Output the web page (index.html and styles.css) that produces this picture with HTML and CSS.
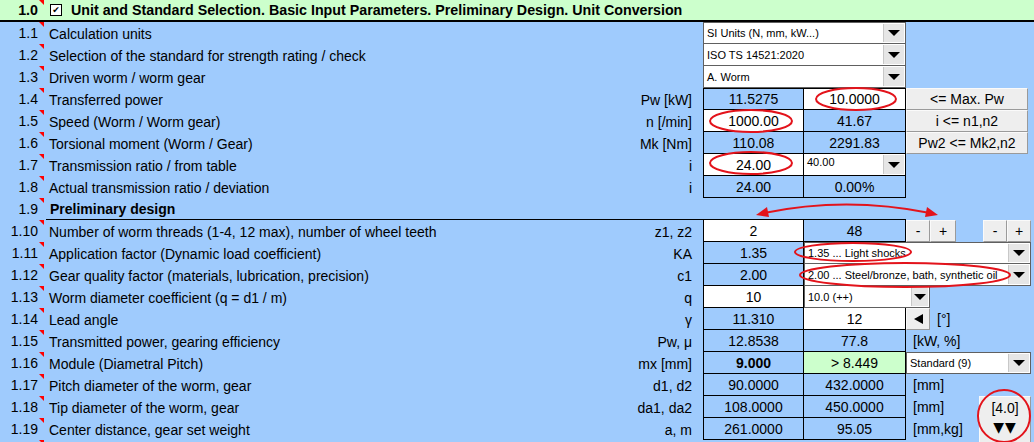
FILE: index.html
```html
<!DOCTYPE html>
<html>
<head>
<meta charset="utf-8">
<link rel="stylesheet" href="styles.css">
</head>
<body>
<div class="sheet">
  <div class="num hd">1.0</div>
  <div class="title hd"><span class="chk">✔</span>Unit and Standard Selection. Basic Input Parameters. Preliminary Design. Unit Conversion</div>

  <div class="num">1.1</div>
  <div class="lbl"><span>Calculation units</span></div>
  <div class="dd s2">SI Units (N, mm, kW...)<i class="arr"></i></div>
  <div></div>

  <div class="num">1.2</div>
  <div class="lbl"><span>Selection of the standard for strength rating / check</span></div>
  <div class="dd s2 nt">ISO TS 14521:2020<i class="arr"></i></div>
  <div></div>

  <div class="num">1.3</div>
  <div class="lbl"><span>Driven worm / worm gear</span></div>
  <div class="dd s2 nt">A. Worm<i class="arr"></i></div>
  <div></div>

  <div class="num">1.4</div>
  <div class="lbl"><span>Transferred power</span><span>Pw [kW]</span></div>
  <div class="v c1 t">11.5275</div>
  <div class="v t w">10.0000</div>
  <div class="btn">&lt;= Max. Pw</div>

  <div class="num">1.5</div>
  <div class="lbl"><span>Speed (Worm / Worm gear)</span><span>n [/min]</span></div>
  <div class="v c1 w">1000.00</div>
  <div class="v">41.67</div>
  <div class="btn">i &lt;= n1,n2</div>

  <div class="num">1.6</div>
  <div class="lbl"><span>Torsional moment (Worm / Gear)</span><span>Mk [Nm]</span></div>
  <div class="v c1">110.08</div>
  <div class="v">2291.83</div>
  <div class="btn">Pw2 &lt;= Mk2,n2</div>

  <div class="num">1.7</div>
  <div class="lbl"><span>Transmission ratio / from table</span><span>i</span></div>
  <div class="v c1 w">24.00</div>
  <div class="v w ddv"><span class="ddt">40.00</span><i class="arr"></i></div>
  <div></div>

  <div class="num">1.8</div>
  <div class="lbl"><span>Actual transmission ratio / deviation</span><span>i</span></div>
  <div class="v c1">24.00</div>
  <div class="v">0.00%</div>
  <div></div>

  <div class="num">1.9</div>
  <div class="lbl sec"><span>Preliminary design</span></div>
  <div class="s2 secline"></div>
  <div></div>

  <div class="num">1.10</div>
  <div class="lbl"><span>Number of worm threads (1-4, 12 max), number of wheel teeth</span><span>z1, z2</span></div>
  <div class="v c1 w">2</div>
  <div class="v">48</div>
  <div class="ext">
    <span class="btn sb">-</span><span class="btn sb wide">+</span>
    <span class="btn sb gapl">-</span><span class="btn sb">+</span>
  </div>

  <div class="num">1.11</div>
  <div class="lbl"><span>Application factor (Dynamic load coefficient)</span><span>KA</span></div>
  <div class="v c1">1.35</div>
  <div class="dd s2 mr3">1.35 ... Light shocks<i class="arr"></i></div>

  <div class="num">1.12</div>
  <div class="lbl"><span>Gear quality factor (materials, lubrication, precision)</span><span>c1</span></div>
  <div class="v c1">2.00</div>
  <div class="dd s2 mr3 nt">2.00 ... Steel/bronze, bath, synthetic oil<i class="arr"></i></div>

  <div class="num">1.13</div>
  <div class="lbl"><span>Worm diameter coefficient (q = d1 / m)</span><span>q</span></div>
  <div class="v c1 w">10</div>
  <div class="dd s2 short nt">10.0 (++)<i class="arr narrow"></i></div>

  <div class="num">1.14</div>
  <div class="lbl"><span>Lead angle</span><span>γ</span></div>
  <div class="v c1">11.310</div>
  <div class="v w">12</div>
  <div class="ext"><span class="btn sb lft"><i class="ltri"></i></span><span class="unit">[°]</span></div>

  <div class="num">1.15</div>
  <div class="lbl"><span>Transmitted power, gearing efficiency</span><span>Pw, μ</span></div>
  <div class="v c1">12.8538</div>
  <div class="v">77.8</div>
  <div class="unit">[kW, %]</div>

  <div class="num">1.16</div>
  <div class="lbl"><span>Module (Diametral Pitch)</span><span>mx [mm]</span></div>
  <div class="v c1 b">9.000</div>
  <div class="v g">&gt; 8.449</div>
  <div class="dd mr3">Standard (9)<i class="arr"></i></div>

  <div class="num">1.17</div>
  <div class="lbl"><span>Pitch diameter of the worm, gear</span><span>d1, d2</span></div>
  <div class="v c1">90.0000</div>
  <div class="v">432.0000</div>
  <div class="unit">[mm]</div>

  <div class="num">1.18</div>
  <div class="lbl"><span>Tip diameter of the worm, gear</span><span>da1, da2</span></div>
  <div class="v c1">108.0000</div>
  <div class="v">450.0000</div>
  <div class="ext2">
    <div class="units"><div class="unit">[mm]</div><div class="unit">[mm,kg]</div></div>
    <div class="btn big"><span>[4.0]</span><span class="tris">▼▼</span></div>
  </div>

  <div class="num">1.19</div>
  <div class="lbl"><span>Center distance, gear set weight</span><span>a, m</span></div>
  <div class="v c1">261.0000</div>
  <div class="v">95.05</div>

  <div class="num"></div>
</div>

<svg class="marks" width="1034" height="442" viewBox="0 0 1034 442">
  <g fill="none" stroke="#e3131b" stroke-width="2">
    <ellipse cx="856" cy="99" rx="40" ry="11"/>
    <ellipse cx="751" cy="121" rx="41" ry="11"/>
    <ellipse cx="751" cy="163" rx="41" ry="11"/>
    <ellipse cx="853" cy="252" rx="58" ry="9"/>
    <ellipse cx="905" cy="275" rx="105" ry="12"/>
    <ellipse cx="1004" cy="416" rx="26" ry="26"/>
    <path d="M764 213 Q846 196 930 213"/>
  </g>
  <g fill="#e3131b">
    <polygon points="756,215 767,207 769,217"/>
    <polygon points="938,215 927,207 925,217"/>
  </g>
</svg>
</body>
</html>
```

FILE: styles.css
```css
html, body {
  margin: 0;
  padding: 0;
  overflow: hidden;
}
body {
  background: #9fcbfd;
  font-family: "Liberation Sans", Arial, sans-serif;
  font-size: 14px;
  color: #000;
  width: 1034px;
  height: 442px;
  position: relative;
}
.sheet {
  display: grid;
  grid-template-columns: 44px 659px 101px 102px 128px;
  grid-auto-rows: 22px;
}
.num {
  position: relative;
  text-align: right;
  padding-right: 6px;
  line-height: 23px;
}
.num::after {
  content: "";
  position: absolute;
  top: 0;
  right: 0;
  border-top: 5px solid #ff0000;
  border-left: 5px solid transparent;
}
.hd {
  background: #ccffcc;
  border-bottom: 2px solid #000;
  font-weight: bold;
  font-size: 14.25px;
  line-height: 20px;
}
.title {
  grid-column: 2 / -1;
  display: flex;
  align-items: center;
  padding-left: 6px;
  white-space: nowrap;
}
.chk {
  width: 10px;
  height: 10px;
  border: 1px solid #000;
  background: #fff;
  margin-right: 9px;
  font-size: 9px;
  line-height: 10px;
  text-align: center;
  font-weight: normal;
  font-family: "DejaVu Sans", sans-serif;
}
.lbl {
  display: flex;
  justify-content: space-between;
  align-items: center;
  padding: 1px 11px 0 5px;
  white-space: nowrap;
}
.sec {
  font-weight: bold;
  margin-left: 2px;
  padding-left: 4px;
  border-bottom: 1px solid #000;
}
.secline {
  border-bottom: 1px solid #000;
}
.s2 {
  grid-column: span 2;
}
.v {
  border-right: 1px solid #000;
  border-bottom: 1px solid #000;
  text-align: center;
  line-height: 22px;
}
.c1 {
  border-left: 1px solid #000;
}
.t {
  border-top: 1px solid #000;
  line-height: 21px;
}
.w {
  background: #fff;
}
.g {
  background: #ccffcc;
}
.b {
  font-weight: bold;
}
.dd {
  background: #fff;
  border: 1px solid #606060;
  display: flex;
  align-items: center;
  justify-content: space-between;
  font-size: 11px;
  padding-left: 3px;
  white-space: nowrap;
}
.nt {
  border-top: 0;
}
.mr3 {
  margin-right: 3px;
}
.short {
  margin-right: 104px;
}
.ddv {
  display: flex;
  justify-content: space-between;
  align-items: stretch;
  font-size: 11px;
  text-align: left;
  padding-left: 3px;
}
.ddt {
  line-height: 17px;
}
.arr {
  width: 20px;
  align-self: stretch;
  background: #e6e6e6;
  border-left: 1px solid #c8c8c8;
  display: flex;
  align-items: center;
  justify-content: center;
  margin: 1px;
}
.arr.narrow {
  width: 16px;
}
.arr::before {
  content: "";
  border-left: 6px solid transparent;
  border-right: 6px solid transparent;
  border-top: 6px solid #000;
}
.btn {
  background: #eeeeee;
  border: 1px solid;
  border-color: #fafafa #9a9a9a #9a9a9a #fafafa;
  text-align: center;
  line-height: 20px;
  margin-right: 6px;
}
.ext {
  display: flex;
  align-items: stretch;
}
.sb {
  width: 24px;
  margin-right: 0;
  flex: none;
  box-sizing: border-box;
}
.sb.wide {
  width: 26px;
}
.sb.gapl {
  margin-left: 27px;
}
.lft {
  display: flex;
  align-items: center;
  justify-content: center;
}
.ltri {
  border-top: 5px solid transparent;
  border-bottom: 5px solid transparent;
  border-right: 9px solid #000;
}
.unit {
  padding-left: 7px;
  line-height: 22px;
  white-space: nowrap;
}
.ext2 {
  grid-row: span 2;
  display: flex;
  align-items: flex-start;
}
.units {
  display: flex;
  flex-direction: column;
}
.big {
  margin-left: auto;
  margin-right: 3px;
  width: 50px;
  height: 48px;
  display: flex;
  flex-direction: column;
  align-items: center;
  padding-top: 1px;
}
.tris {
  font-family: "DejaVu Sans", sans-serif;
  font-size: 14px;
  letter-spacing: 1px;
  line-height: 18px;
}
.marks {
  position: absolute;
  left: 0;
  top: 0;
  pointer-events: none;
}
```
